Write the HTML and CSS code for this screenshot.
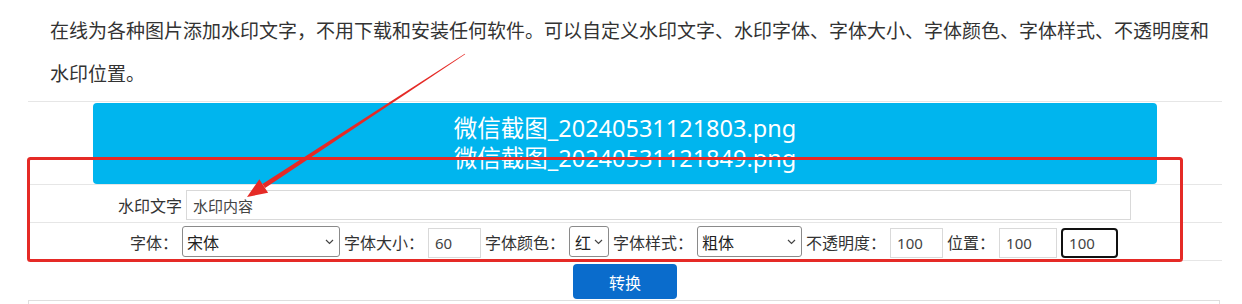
FILE: index.html
```html
<!DOCTYPE html>
<html lang="zh-CN">
<head>
<meta charset="utf-8">
<title>在线图片加水印</title>
<link rel="stylesheet" href="styles.css">
</head>
<body>
<div class="page">
  <p class="intro">在线为各种图片添加水印文字，不用下载和安装任何软件。可以自定义水印文字、水印字体、字体大小、字体颜色、字体样式、不透明度和水印位置。</p>
  <div class="table">
    <div class="row row-files">
      <div class="files">
        <div>微信截图_20240531121803.png</div>
        <div>微信截图_20240531121849.png</div>
      </div>
    </div>
    <div class="row row-text">
      <label class="lbl-cell">水印文字</label>
      <input class="inp inp-text" type="text" value="水印内容">
    </div>
    <div class="row row-opts">
      <span class="lbl">字体：</span>
      <span class="sel sel-font"><select><option>宋体</option></select><svg class="chev" width="9" height="6" viewBox="0 0 9 6"><path d="M1 1 L4.5 4.5 L8 1" fill="none" stroke="#444" stroke-width="1.2"/></svg></span>
      <span class="lbl">字体大小：</span>
      <input class="inp inp-s" type="text" value="60">
      <span class="lbl">字体颜色：</span>
      <span class="sel sel-color"><select><option>红</option></select><svg class="chev" width="9" height="6" viewBox="0 0 9 6"><path d="M1 1 L4.5 4.5 L8 1" fill="none" stroke="#444" stroke-width="1.2"/></svg></span>
      <span class="lbl">字体样式：</span>
      <span class="sel sel-style"><select><option>粗体</option></select><svg class="chev" width="9" height="6" viewBox="0 0 9 6"><path d="M1 1 L4.5 4.5 L8 1" fill="none" stroke="#444" stroke-width="1.2"/></svg></span>
      <span class="lbl">不透明度：</span>
      <input class="inp inp-s" type="text" value="100">
      <span class="lbl">位置：</span>
      <input class="inp inp-m" type="text" value="100">
      <input class="inp inp-m inp-focus" type="text" value="100">
    </div>
    <div class="row row-btn">
      <button class="btn" type="button">转换</button>
    </div>
  </div>
  <div class="box"></div>
  <svg class="annot" width="1242" height="304" viewBox="0 0 1242 304">
    <rect x="28.5" y="158.5" width="1153" height="102" rx="2" fill="none" stroke="#e52a26" stroke-width="3"/>
    <polygon points="465.2,54.3 464.8,53.7 262.4,183.9 265.1,188.1" fill="#e52a26"/>
    <polygon points="247,197 259.3,179.3 268.1,192.7" fill="#e52a26"/>
  </svg>
</div>
</body>
</html>
```

FILE: styles.css
```css
body {
  margin: 0;
  background: #fff;
  color: #333;
  font-family: "Noto Sans", "Noto Sans CJK SC", sans-serif;
}

.page {
  position: relative;
  width: 1242px;
  height: 304px;
  overflow: hidden;
}

.intro {
  margin: 0;
  padding: 8px 27px 0 50px;
  font-family: "Noto Sans CJK SC", sans-serif;
  font-size: 19px;
  line-height: 43px;
  color: #333;
}

.table {
  margin: 7px 20px 0 28px;
}

.row {
  display: flex;
  box-sizing: border-box;
  border-top: 1px solid #e6e6e6;
}

.row-files {
  height: 83px;
  padding-top: 1px;
  justify-content: center;
  align-items: flex-start;
}

.files {
  width: 1064px;
  height: 81px;
  box-sizing: border-box;
  padding-top: 10px;
  background: #00b5ee;
  border-radius: 4px;
  color: #fff;
  font-size: 23.5px;
  line-height: 30px;
  text-align: center;
}

.row-text {
  height: 38px;
  padding-top: 5px;
  align-items: flex-start;
}

.lbl-cell {
  width: 154px;
  text-align: right;
  font-family: "Noto Sans CJK SC", sans-serif;
  font-size: 16px;
  line-height: 30px;
  color: #333;
}

.inp {
  box-sizing: border-box;
  height: 30px;
  margin: 0;
  padding: 0 6px;
  border: 1px solid #d9d9d9;
  border-radius: 0;
  background: #fff;
  color: #444;
  font-family: "Noto Sans", "Noto Sans CJK SC", sans-serif;
  font-size: 15px;
  outline: none;
}

.inp-text {
  width: 945px;
  margin-left: 4px;
}

.row-opts {
  height: 38px;
  padding-left: 102px;
  align-items: center;
  gap: 4px;
}

.row-opts .inp {
  margin-top: 3px;
}

.lbl {
  font-family: "Noto Sans CJK SC", sans-serif;
  font-size: 16px;
  color: #333;
  white-space: nowrap;
}

.inp-s { width: 53px; }
.inp-m { width: 58px; }

.inp-focus {
  width: 57px;
  border: 2px solid #111;
  border-radius: 4px;
  padding-left: 6px;
}

.sel {
  position: relative;
  display: inline-block;
  height: 31px;
}

.sel select {
  appearance: none;
  -webkit-appearance: none;
  box-sizing: border-box;
  width: 100%;
  height: 31px;
  margin: 0;
  padding: 0 14px 0 4px;
  border: 1px solid #8a8a8a;
  border-radius: 3px;
  background: #fff;
  color: #222;
  font-family: "Noto Sans CJK SC", sans-serif;
  font-size: 16px;
}

.sel-font { width: 158px; }
.sel-color { width: 40px; }
.sel-color select { padding-left: 5px; }
.sel-style { width: 105px; }

.chev {
  position: absolute;
  right: 6px;
  top: 13px;
  pointer-events: none;
}

.row-btn {
  height: 40px;
  padding-top: 3px;
  justify-content: center;
  align-items: flex-start;
}

.btn {
  width: 104px;
  height: 35px;
  border: none;
  border-radius: 4px;
  background: #0a6ccc;
  color: #fff;
  font-family: "Noto Sans CJK SC", sans-serif;
  font-size: 16px;
}

.box {
  margin: 0 22px 0 28px;
  height: 10px;
  border: 1px solid #dedede;
  border-bottom: none;
}

.annot {
  position: absolute;
  left: 0;
  top: 0;
  pointer-events: none;
}
```
